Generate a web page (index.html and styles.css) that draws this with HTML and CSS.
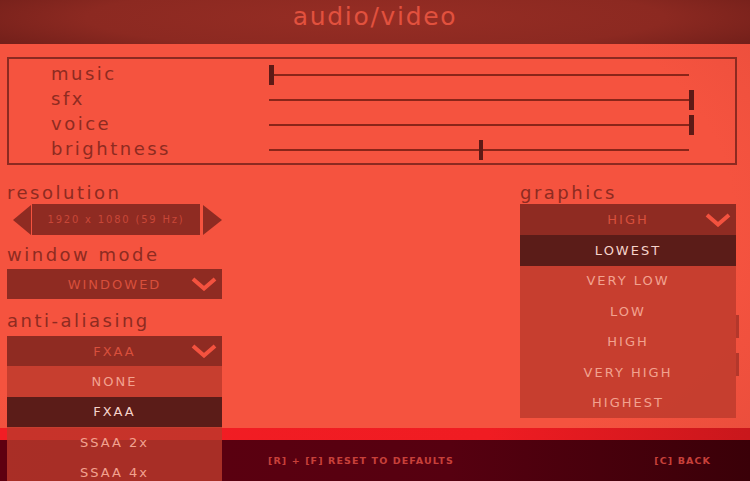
FILE: index.html
```html
<!DOCTYPE html>
<html lang="en">
<head>
    <meta charset="UTF-8">
    <meta name="viewport" content="width=device-width, initial-scale=1.0">
    <title>audio/video</title>
    <link rel="stylesheet" href="styles.css">
</head>
<body>
<div class="screen">
    <header class="topbar">
        <h1>audio/video</h1>
    </header>

    <main class="content">
        <!-- volume / brightness sliders -->
        <section class="levels">
            <div class="level">
                <span class="level-name">music</span>
                <div class="slider"><div class="thumb" style="left: 0%"></div></div>
            </div>
            <div class="level">
                <span class="level-name">sfx</span>
                <div class="slider"><div class="thumb" style="left: 100%"></div></div>
            </div>
            <div class="level">
                <span class="level-name">voice</span>
                <div class="slider"><div class="thumb" style="left: 100%"></div></div>
            </div>
            <div class="level">
                <span class="level-name">brightness</span>
                <div class="slider"><div class="thumb thin" style="left: 50%"></div></div>
            </div>
        </section>

        <div class="columns">
            <div class="col">
                <div class="field-label">resolution</div>
                <div class="stepper">
                    <span class="arrow arrow-left"></span>
                    <div class="stepper-value">1920 x 1080 (59 Hz)</div>
                    <span class="arrow arrow-right"></span>
                </div>

                <div class="field-label label-window">window mode</div>
                <div class="select">
                    <div class="select-head">
                        <span>WINDOWED</span>
                        <svg class="chevron" viewBox="0 0 26 14"><polyline points="2,2 13,11.5 24,2"/></svg>
                    </div>
                </div>

                <div class="field-label label-aa">anti-aliasing</div>
                <div class="select">
                    <div class="select-head">
                        <span>FXAA</span>
                        <svg class="chevron" viewBox="0 0 26 14"><polyline points="2,2 13,11.5 24,2"/></svg>
                    </div>
                    <ul class="options">
                        <li>NONE</li>
                        <li class="selected">FXAA</li>
                        <li>SSAA 2x</li>
                        <li>SSAA 4x</li>
                    </ul>
                </div>
            </div>

            <div class="col col-right">
                <div class="field-label">graphics</div>
                <div class="select">
                    <div class="select-head tall">
                        <span>HIGH</span>
                        <svg class="chevron" viewBox="0 0 26 14"><polyline points="2,2 13,11.5 24,2"/></svg>
                    </div>
                    <ul class="options">
                        <li class="selected">LOWEST</li>
                        <li>VERY LOW</li>
                        <li>LOW</li>
                        <li>HIGH</li>
                        <li>VERY HIGH</li>
                        <li>HIGHEST</li>
                    </ul>
                </div>
                <!-- controls hidden behind the open list -->
                <div class="ghost first"></div>
                <div class="ghost"></div>
            </div>
        </div>
    </main>

    <footer class="bottombar">
        <div class="stripe"></div>
        <div class="hints">
            <span>[R] + [F] RESET TO DEFAULTS</span>
            <span>[C] BACK</span>
        </div>
    </footer>
</div>
</body>
</html>
```

FILE: styles.css
```css
body {
    margin: 0;
    font-family: "DejaVu Sans", "Liberation Sans", sans-serif;
    background-color: #f4523f;
}
.screen {
    width: 750px;
    height: 481px;
    overflow: hidden;
}
.topbar {
    height: 44px;
    box-sizing: border-box;
    padding-top: 4px;
    display: flex;
    justify-content: center;
    background: radial-gradient(ellipse 70% 130% at 50% 40%, #962d24 0%, #8c2921 55%, #651a16 100%);
}
h1 {
    margin: 0;
    font-weight: normal;
    font-size: 25px;
    line-height: 25px;
    letter-spacing: 1.7px;
    color: #e2513e;
}
.content {
    height: 384px;
    box-sizing: border-box;
    padding-top: 13px;
    background: radial-gradient(ellipse 90% 110% at 42% 45%, #f5533f 62%, #e24a3a 100%);
}
.levels {
    margin: 0 13px 0 7px;
    border: 2px solid #8c2a21;
    padding: 3px 0 1px 42px;
}
.level {
    display: grid;
    grid-template-columns: 218px 420px;
    height: 25px;
    align-items: center;
}
.level-name {
    font-size: 18px;
    line-height: 20px;
    letter-spacing: 2.5px;
    color: #8e2b21;
    padding-bottom: 2px;
}
.slider {
    position: relative;
    height: 2px;
    background-color: #8a2519;
}
.thumb {
    position: absolute;
    top: -9px;
    width: 5px;
    height: 20px;
    background-color: #5e1a16;
}
.thumb.thin {
    width: 4px;
}
.columns {
    display: flex;
    justify-content: space-between;
    margin: 18px 14px 0 7px;
}
.col {
    width: 215px;
}
.col-right {
    width: 216px;
}
.field-label {
    font-size: 18px;
    line-height: 20px;
    letter-spacing: 2.5px;
    color: #8e2b21;
    margin-bottom: 1px;
}
.label-window {
    margin-top: 10px;
    margin-bottom: 4px;
}
.label-aa {
    margin-top: 12px;
    margin-bottom: 5px;
}
.stepper {
    display: flex;
    align-items: center;
    height: 31px;
    margin-left: 6px;
}
.arrow {
    width: 0;
    height: 0;
    border-top: 15px solid transparent;
    border-bottom: 15px solid transparent;
}
.arrow-left {
    border-right: 18px solid #8f2b22;
    margin-right: 1px;
}
.arrow-right {
    border-left: 19px solid #8f2b22;
    margin-left: 3px;
}
.stepper-value {
    width: 168px;
    height: 31px;
    background-color: #8f2b22;
    display: flex;
    align-items: center;
    justify-content: center;
    font-size: 10px;
    letter-spacing: 1.8px;
    color: #c84738;
}
.select {
    position: relative;
}
.select-head {
    display: grid;
    align-items: center;
    height: 30px;
    background-color: #8f2b22;
}
.select-head.tall {
    height: 31px;
}
.select-head > * {
    grid-area: 1 / 1;
}
.select-head span {
    justify-self: center;
    font-size: 13px;
    letter-spacing: 2px;
    color: #d84f3c;
}
.chevron {
    justify-self: end;
    margin-right: 5px;
    width: 26px;
    height: 14px;
    fill: none;
    stroke: #f4523f;
    stroke-width: 4;
}
.options {
    position: absolute;
    top: 100%;
    left: 0;
    right: 0;
    margin: 0;
    padding: 0;
    list-style: none;
    background-color: rgba(188, 58, 44, 0.8);
    z-index: 2;
}
.options li {
    height: 30.5px;
    display: flex;
    align-items: center;
    justify-content: center;
    font-size: 13px;
    letter-spacing: 2px;
    color: #f2a28f;
}
.options li.selected {
    background-color: #5b1c18;
    color: #f6d3ca;
}
.ghost {
    height: 23px;
    margin-top: 15px;
    margin-right: -3px;
    border-right: 3px solid #b3372b;
}
.ghost.first {
    margin-top: 80px;
}
.stripe {
    height: 12px;
    background: linear-gradient(90deg, #f21d24 0%, #f01c22 65%, #c9171c 100%);
}
.hints {
    height: 41px;
    display: flex;
    align-items: center;
    justify-content: space-between;
    padding: 0 39px 0 268px;
    background: linear-gradient(90deg, #5e0010 0%, #560010 60%, #3a0008 100%);
    font-size: 9.5px;
    font-weight: bold;
    letter-spacing: 1.1px;
    color: #c8403a;
}
```
